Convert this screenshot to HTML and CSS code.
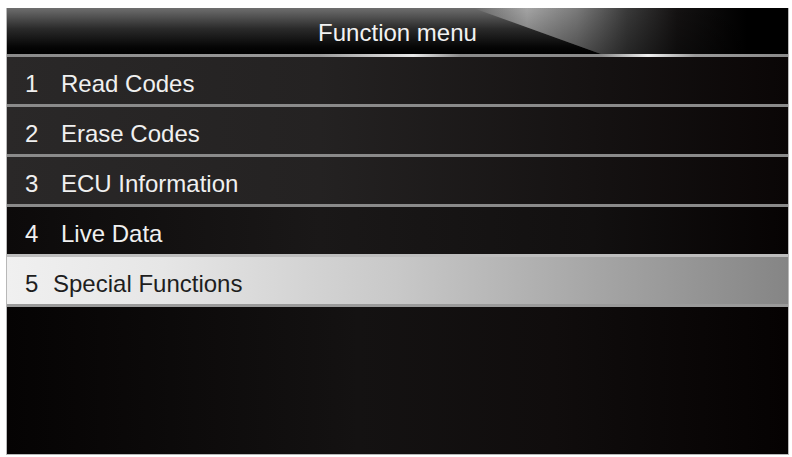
FILE: index.html
```html
<!DOCTYPE html>
<html lang="en">
  <head>
    <meta charset="UTF-8" />
    <meta name="viewport" content="width=device-width, initial-scale=1.0" />
    <title>Function menu</title>

    <link rel="stylesheet" href="styles.css">
  </head>

  <body>
    <div class="screen">
      <header class="title">
        <h1>Function menu</h1>
      </header>

      <ul class="menu">
        <li class="item"><span class="num">1</span>Read Codes</li>
        <li class="item"><span class="num">2</span>Erase Codes</li>
        <li class="item"><span class="num">3</span>ECU Information</li>
        <li class="item dark"><span class="num">4</span>Live Data</li>
        <li class="item selected"><span class="num">5</span>Special Functions</li>
      </ul>

      <div class="blank"></div>
    </div>
  </body>
</html>
```

FILE: styles.css
```css
* {
  margin: 0;
  padding: 0;
  box-sizing: border-box;
}

body {
  background-color: #fff;
  font-family: "Liberation Sans", Arial, sans-serif;
}

.screen {
  width: 783px;
  height: 447px;
  margin: 8px 0 0 6px;
  border: 1px solid #b8b8b8;
  border-top: none;

  display: flex;
  flex-direction: column;
  background-color: #0a0808;
}

/* title bar with the glossy sheen on the right */
.title {
  position: relative;
  overflow: hidden;
  height: 49px;
  padding-top: 4px;
  text-align: center;

  background: linear-gradient(to bottom, #6e6e6e 0%, #2a2a2a 45%, #050505 85%, #000 100%);
  border-bottom: 3px solid #8c8c8c;
  border-image: linear-gradient(to right, #8a8a8a 0%, #9a9a9a 40%, #e8e8e8 52%, #8a8a8a 58%, #8a8a8a 76%, #f0f0f0 82%, #9a9a9a 88%, #8a8a8a 100%) 1;
}

.title::before {
  content: "";
  position: absolute;
  top: 0;
  right: 0;
  bottom: 0;
  left: 0;
  clip-path: polygon(466px 0, 100% 0, 100% 100%, 594px 100%);
  background:
    linear-gradient(to bottom, rgba(0, 0, 0, 0) 0%, rgba(0, 0, 0, 0.35) 100%),
    linear-gradient(to right, #6a6a6a 466px, #a4a4a4 520px, #7a7a7a 570px, #3a3a3a 620px, #141212 670px, #000 740px);
}

.title h1 {
  position: relative;
  z-index: 1;
  font-size: 24px;
  font-weight: normal;
  line-height: 42px;
  color: #f2f2f2;
}

.menu {
  list-style: none;
}

.item {
  height: 50px;
  padding: 6px 0 0 18px;
  font-size: 24px;
  line-height: 41px;
  color: #f0f0f0;

  display: flex;
  background: linear-gradient(to right, #2a2828 0%, #242222 40%, #151212 75%, #0a0606 100%);
  border-bottom: 3px solid #8a8a8a;
}

.item.dark {
  background: linear-gradient(to right, #0c0a0a 0%, #1a1818 40%, #121010 75%, #060303 100%);
  border-bottom-color: #bdbdbd;
}

.num {
  width: 36px;
}

.item.selected {
  padding-left: 18px;
  color: #1e1e1e;
  background: linear-gradient(to right, #f0f0f0 0%, #e6e6e6 20%, #c8c8c8 50%, #a6a6a6 75%, #858585 100%);
  border-bottom-color: #9a9a9a;
}

.item.selected .num {
  width: 28px;
}

.blank {
  flex: 1;
  background: linear-gradient(to right, #050303 0%, #141212 45%, #100d0d 70%, #050202 100%);
}
```
